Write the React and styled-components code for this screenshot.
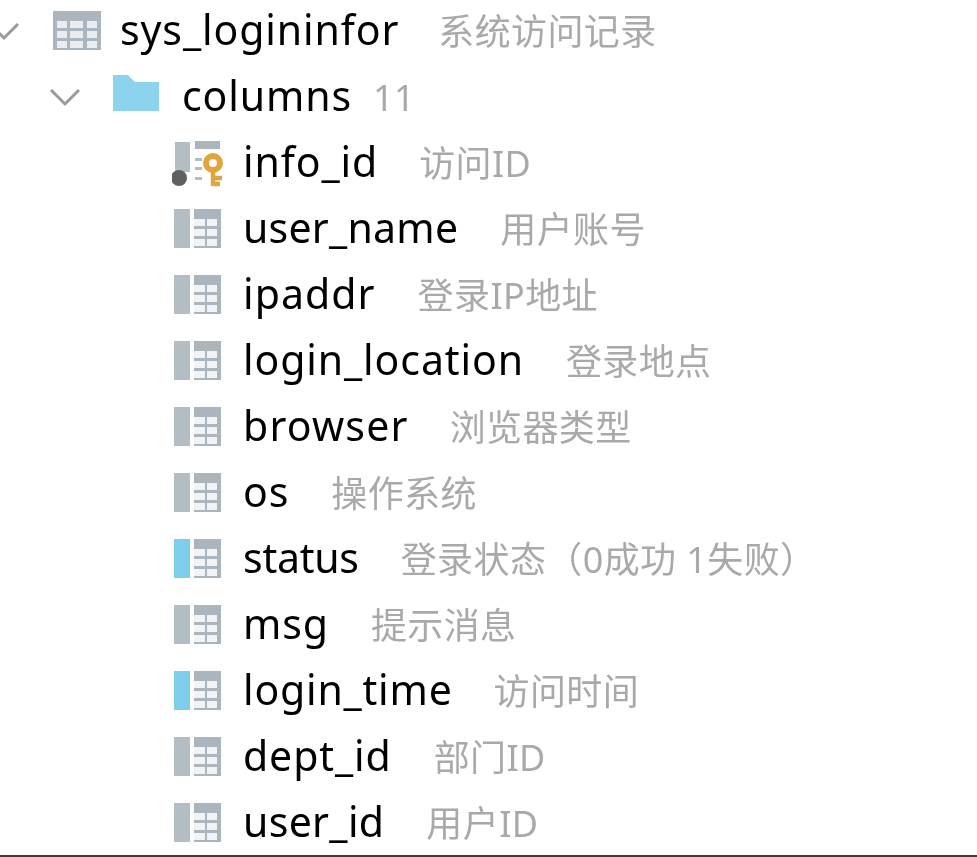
import React from 'react';
import styled, { createGlobalStyle } from 'styled-components';

const GlobalStyle = createGlobalStyle`
  html, body {
    margin: 0;
    padding: 0;
    background: #ffffff;
  }
`;

const Page = styled.div`
  width: 977px;
  height: 857px;
  overflow: hidden;
  display: flex;
  flex-direction: column;
  box-sizing: border-box;
  border-bottom: 2px solid #3c3c3c;
  font-family: "Noto Sans", "Noto Sans CJK SC", sans-serif;
`;

const Tree = styled.div`
  flex: 1;
  overflow: hidden;
  display: flex;
  flex-direction: column;
  margin-top: -2px;
  filter: blur(0.4px);
`;

const Row = styled.div`
  height: 66px;
  flex: none;
  display: flex;
  align-items: center;
  padding-left: ${p => p.$indent}px;
`;

const IconSlot = styled.span`
  display: flex;
  width: ${p => p.$width}px;
  flex: none;
`;

const Name = styled.span`
  font-size: 41px;
  line-height: 63px;
  height: 66px;
  color: #000000;
  letter-spacing: ${p => p.$track ?? 0.9}px;
  white-space: nowrap;
`;

const Comment = styled.span`
  font-size: 36px;
  line-height: 67px;
  height: 66px;
  color: #a9a9a9;
  letter-spacing: 0.4px;
  margin-left: ${p => p.$gap}px;
  white-space: nowrap;
`;

const ChevronMark = styled.svg`
  margin-left: ${p => p.$x}px;
`;

const Chevron = ({ x }) => (
  <ChevronMark $x={x} width="32" height="20" viewBox="0 0 32 20">
    <path d="M2 3 L16 17 L30 3" fill="none" stroke="#9a9a9a" strokeWidth="3" />
  </ChevronMark>
);

const tableCols = [[4, 10], [17, 13], [34, 10]];

const TableIcon = () => (
  <svg width="48" height="40" viewBox="0 0 48 40">
    <rect x="0" y="0" width="48" height="39" fill="#abb5bd" />
    {[0, 1, 2].map(r =>
      tableCols.map(([x, w]) => (
        <rect key={`${r}-${x}`} x={x} y={10 + r * 10} width={w} height="7" fill="#e9edf0" />
      ))
    )}
  </svg>
);

const FolderIcon = () => (
  <svg width="48" height="44" viewBox="0 0 48 44">
    <path d="M0 0 H15 L22 7 H46 V36 H0 Z" fill="#8cd3ee" />
  </svg>
);

const ColumnIcon = ({ color }) => (
  <svg width="48" height="42" viewBox="0 0 48 42">
    <rect x="0" y="1" width="16" height="39" fill={color} />
    <rect x="20" y="1" width="27" height="39" fill="#abb5bd" />
    {[0, 1, 2].map(r =>
      [0, 1].map(c => (
        <rect key={`${r}-${c}`} x={c === 0 ? 20 : 33} y={11 + r * 10} width={c === 0 ? 11 : 10} height="7" fill="#f1f3f5" />
      ))
    )}
  </svg>
);

const KeyIcon = () => (
  <svg width="54" height="48" viewBox="0 0 54 48">
    <rect x="3" y="3" width="15" height="30" fill="#b3bdc4" />
    <rect x="23" y="2" width="25" height="8" fill="#abb5bd" />
    <rect x="23" y="19" width="7" height="3" fill="#b3bdc4" />
    <rect x="23" y="28" width="7" height="3" fill="#b3bdc4" />
    <rect x="23" y="38" width="7" height="3" fill="#b3bdc4" />
    <circle cx="7" cy="39" r="8" fill="#606060" />
    <circle cx="41" cy="24" r="7" fill="none" stroke="#e2a53c" strokeWidth="6" />
    <path d="M41 31 V47 M41 39 H50 M41 45 H48" fill="none" stroke="#e2a53c" strokeWidth="4.5" />
  </svg>
);

const columns = [
  { name: 'info_id', comment: '访问ID', gap: 41, key: true },
  { name: 'user_name', comment: '用户账号', gap: 42, track: 0.25 },
  { name: 'ipaddr', comment: '登录IP地址', gap: 42, track: 1.07 },
  { name: 'login_location', comment: '登录地点', gap: 42 },
  { name: 'browser', comment: '浏览器类型', gap: 41, track: 1.2 },
  { name: 'os', comment: '操作系统', gap: 42 },
  { name: 'status', comment: '登录状态（0成功 1失败）', gap: 42, track: -0.25 },
  { name: 'msg', comment: '提示消息', gap: 42 },
  { name: 'login_time', comment: '访问时间', gap: 41, track: 0.8 },
  { name: 'dept_id', comment: '部门ID', gap: 42 },
  { name: 'user_id', comment: '用户ID', gap: 42, track: 0.33 },
];

const indexedColumns = ['status', 'login_time'];

const App = () => (
  <Page>
    <GlobalStyle />
    <Tree>
      <Row $indent={0}>
        <IconSlot $width={53}>
          <Chevron x={-12} />
        </IconSlot>
        <IconSlot $width={67}>
          <TableIcon />
        </IconSlot>
        <Name>sys_logininfor</Name>
        <Comment $gap={39}>系统访问记录</Comment>
      </Row>
      <Row $indent={49}>
        <IconSlot $width={64}>
          <Chevron x={0} />
        </IconSlot>
        <IconSlot $width={69}>
          <FolderIcon />
        </IconSlot>
        <Name>columns</Name>
        <Comment $gap={21}>11</Comment>
      </Row>
      {columns.map(c => (
        <Row key={c.name} $indent={c.key ? 172 : 174}>
          <IconSlot $width={c.key ? 71 : 69}>
            {c.key ? <KeyIcon /> : <ColumnIcon color={indexedColumns.includes(c.name) ? '#7fcdec' : '#b3bdc4'} />}
          </IconSlot>
          <Name $track={c.track}>{c.name}</Name>
          <Comment $gap={c.gap}>{c.comment}</Comment>
        </Row>
      ))}
    </Tree>
  </Page>
);

export default App;
